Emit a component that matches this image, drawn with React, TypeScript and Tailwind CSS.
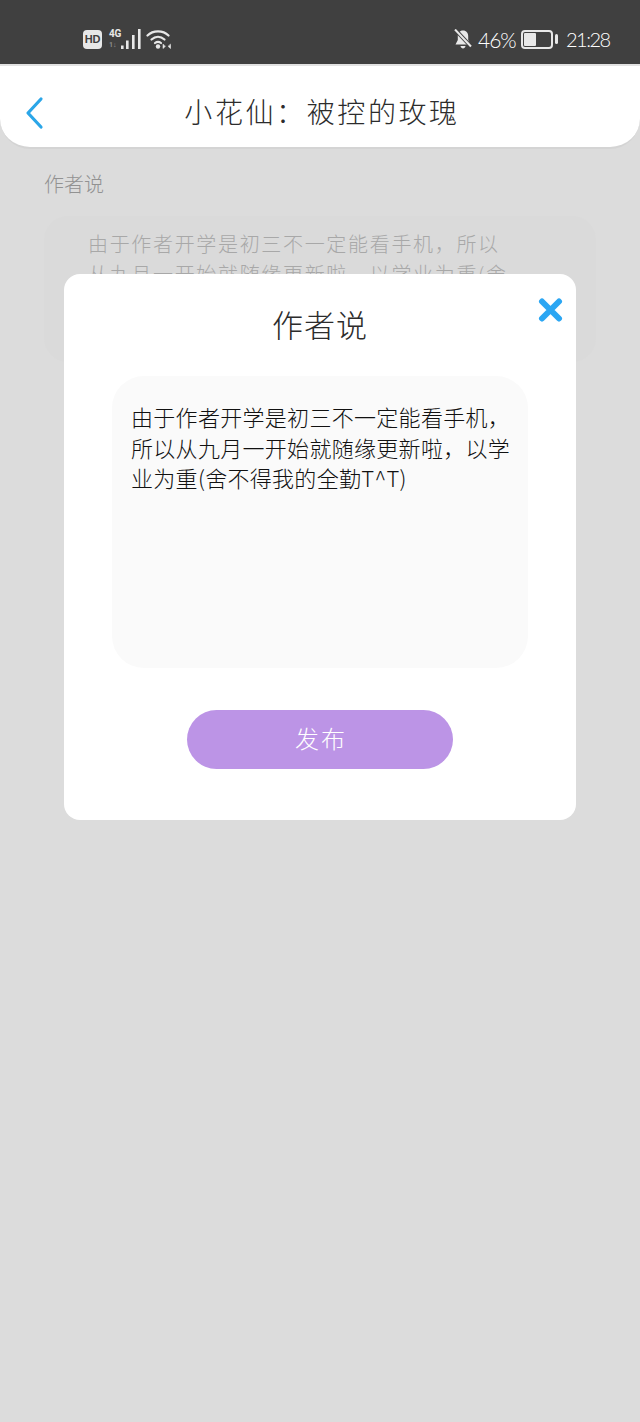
const cjk = "font-['Noto_Sans_CJK_SC','Liberation_Sans',sans-serif]";

const bodyLines = [
  "由于作者开学是初三不一定能看手机，",
  "所以从九月一开始就随缘更新啦，以学",
  "业为重(舍不得我的全勤T^T)",
];

const behindLines = [
  "由于作者开学是初三不一定能看手机，所以",
  "从九月一开始就随缘更新啦，以学业为重(舍",
  "不得我的全勤T^T)",
];

function SignalIcons() {
  return (
    <div className="flex h-[20px] items-center">
      <div className="flex h-[19px] w-[19px] items-center justify-center rounded-[4px] bg-[#e8e8e8] font-['Liberation_Sans',sans-serif] text-[11px] font-bold tracking-[-0.3px] text-[#404040]">
        HD
      </div>
      <div className="relative ml-[7px] h-[20px] w-[32px]">
        <span className="absolute top-[0px] left-0 font-['Roboto',sans-serif] text-[10px] leading-[10px] font-bold tracking-[-0.3px] text-[#e8e8e8]">
          4G
        </span>
        <span className="absolute top-[13px] left-0 font-['Roboto',sans-serif] text-[7px] leading-[7px] font-bold text-[#8c8c8c]">
          1↓
        </span>
        <svg className="absolute top-0 left-[12px]" width="20" height="20" viewBox="0 0 20 20" fill="#e8e8e8">
          <rect x="0" y="16.500" width="2.600" height="3.500" />
          <rect x="5" y="11.500" width="2.600" height="8.500" />
          <rect x="11" y="6" width="2.600" height="14" />
          <rect x="17" y="0" width="2.600" height="20" />
        </svg>
      </div>
      <svg className="ml-[5px]" width="25" height="20" viewBox="0 0 25 20" fill="none" stroke="#e8e8e8" strokeWidth="2.200" strokeLinecap="round">
        <path d="M1.500 6.500C7 1 17 1 22.500 6.500" />
        <path d="M5.500 10.500C9.500 6.800 14.500 6.800 18.500 10.500" />
        <path d="M9 14C10.800 12.600 13.200 12.600 15 14" />
        <circle cx="12" cy="17.500" r="2.200" fill="#e8e8e8" stroke="none" />
        <path d="M17 15.500v4l2.200-2zM24.500 15.500v4l-2.200-2z" fill="#e8e8e8" strokeWidth="0.600" />
      </svg>
    </div>
  );
}

function StatusIcons() {
  return (
    <div className="flex h-[20px] items-center font-['Lato',sans-serif] text-white">
      <svg width="18" height="20" viewBox="0 0 18 20" fill="#e8e8e8">
        <path d="M9 1.500c-3.400 0-5.200 2.500-5.200 5.700v3.800L1.500 15.500h15l-2.300-4.500V7.200C14.200 4 12.400 1.500 9 1.500z" />
        <path d="M6.500 17h5c-.3 1.500-1.200 2.500-2.500 2.500S6.800 18.500 6.500 17z" />
        <path d="M1.500 1 17 17.500" stroke="#404040" strokeWidth="4" />
        <path d="M1 .5 17 17.500" stroke="#e8e8e8" strokeWidth="2" />
      </svg>
      <span className="ml-[6px] w-[37px] text-[21px] leading-none font-light tracking-[-1px] whitespace-nowrap">46%</span>
      <div className="ml-[6px] flex items-center">
        <div className="flex h-[19px] w-[32px] items-center rounded-[4px] border-2 border-[#e8e8e8] p-[1px]">
          <div className="h-full w-[12px] rounded-[1px] bg-[#e8e8e8]" />
        </div>
        <div className="ml-[2px] h-[10px] w-[3px] rounded-sm bg-[#e8e8e8]" />
      </div>
      <span className="ml-[8px] w-[45px] text-[20px] leading-none font-light tracking-[-1.500px] whitespace-nowrap">21:28</span>
    </div>
  );
}

export default function App() {
  return (
    <div className={`relative h-[1422px] w-[640px] overflow-hidden bg-[#dcdcdc] ${cjk}`}>
      {/* status bar */}
      <div className="flex h-[64px] items-start justify-between bg-[#404040] pt-[29px] pr-[29px] pl-[83px]">
        <SignalIcons />
        <StatusIcons />
      </div>

      {/* header */}
      <div className="relative flex h-[85px] items-center justify-center rounded-b-[30px] border-t-2 border-b-2 border-t-[#e2e2e2] border-b-[#d4d4d4] bg-white pt-[8px] pl-[4px]">
        <svg className="absolute top-[30px] left-[25px]" width="19" height="34" viewBox="0 0 19 34" fill="none" stroke="#2ba6e8" strokeWidth="3.200" strokeLinecap="round" strokeLinejoin="round">
          <path d="M16 3 3 17l13 14" />
        </svg>
        <h1 className="text-[28px] leading-none font-light tracking-[2.600px] text-[#2c2c2c]">小花仙：被控的玫瑰</h1>
      </div>

      {/* page behind the dialog */}
      <div className="px-[44px] pt-[23px]">
        <div className="text-[20px] leading-[24px] font-light text-[#929292]">作者说</div>
        <div className="mt-[20px] h-[146px] rounded-[24px] bg-[#dadada] px-[44px] pt-[13px] text-[20px] leading-[30px] font-light tracking-[1.670px] whitespace-nowrap text-[#a8a8a8]">
          {behindLines.map((line) => (
            <div key={line}>{line}</div>
          ))}
        </div>
      </div>

      {/* dialog */}
      <div className="absolute top-[274px] left-[64px] flex h-[546px] w-[512px] flex-col items-center rounded-[16px] bg-white">
        <svg className="absolute top-[24px] right-[13px]" width="25" height="24" viewBox="0 0 25 24" fill="none" stroke="#2ba6f3" strokeWidth="6" strokeLinecap="round">
          <path d="M4 3.500 21 20.500M21 3.500 4 20.500" />
        </svg>
        <h2 className="mt-[31px] text-[31px] leading-[38px] font-light tracking-[1px] text-[#2c2c2c]">作者说</h2>
        <div className="mt-[33px] h-[292px] w-[416px] rounded-[32px] bg-[#fafafa] pt-[25px] pl-[19px] text-[22px] leading-[30.500px] font-light tracking-[0.300px] whitespace-nowrap text-[#111111]">
          {bodyLines.map((line) => (
            <div key={line}>{line}</div>
          ))}
        </div>
        <button className="mt-[42px] h-[59px] w-[266px] rounded-full bg-[#bc94e6] pb-[3px] pl-[2px] text-[24px] font-light tracking-[2px] text-white">
          发布
        </button>
      </div>
    </div>
  );
}
